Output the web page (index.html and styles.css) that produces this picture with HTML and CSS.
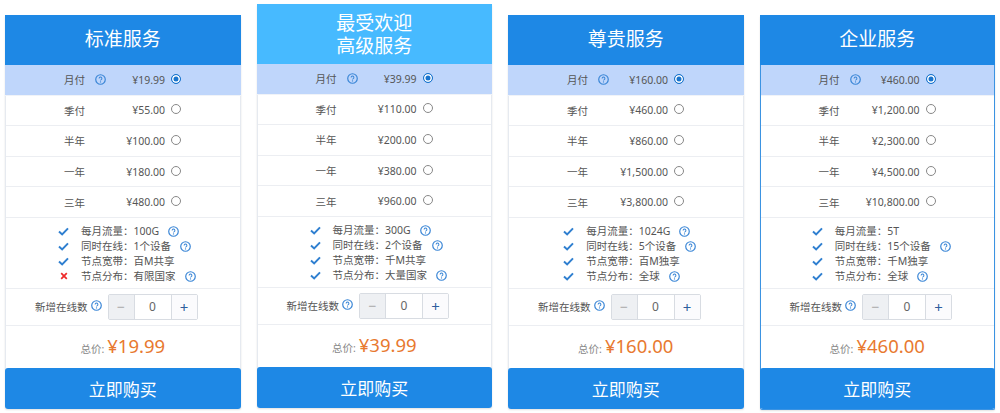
FILE: index.html
```html
<!DOCTYPE html>
<html lang="zh">
<head>
<meta charset="utf-8">
<title>服务套餐</title>
<link rel="stylesheet" href="styles.css">
</head>
<body>
<svg class="defs" width="0" height="0" aria-hidden="true">
  <defs>
    <symbol id="help" viewBox="0 0 12 12"><circle cx="6" cy="6" r="5.2" fill="none" stroke="currentColor" stroke-width="1.3"/><path d="M4.5 4.8a1.5 1.5 0 1 1 2.3 1.3c-.5.3-.8.5-.8 1" fill="none" stroke="currentColor" stroke-width="1.1"/><circle cx="6" cy="8.7" r=".7" fill="currentColor"/></symbol>
    <symbol id="check" viewBox="0 0 12 10"><path d="M1 5l3.5 3.3L11 1.5" fill="none" stroke="currentColor" stroke-width="2.2"/></symbol>
    <symbol id="cross" viewBox="0 0 10 10"><path d="M1.5 1.5l7 7M8.5 1.5l-7 7" fill="none" stroke="currentColor" stroke-width="2.2"/></symbol>
  </defs>
</svg>
<main class="plans">

<section class="card">
  <h2 class="head">标准服务</h2>
  <ul class="terms">
    <li class="term on"><span class="t-name">月付</span><svg class="help t-help"><use href="#help"/></svg><span class="t-price">¥19.99</span><i class="radio"></i></li>
    <li class="term"><span class="t-name">季付</span><span class="t-gap"></span><span class="t-price">¥55.00</span><i class="radio"></i></li>
    <li class="term"><span class="t-name">半年</span><span class="t-gap"></span><span class="t-price">¥100.00</span><i class="radio"></i></li>
    <li class="term"><span class="t-name">一年</span><span class="t-gap"></span><span class="t-price">¥180.00</span><i class="radio"></i></li>
    <li class="term"><span class="t-name">三年</span><span class="t-gap"></span><span class="t-price">¥480.00</span><i class="radio"></i></li>
  </ul>
  <ul class="feats">
    <li><svg class="ico yes"><use href="#check"/></svg>每月流量：100G<svg class="help"><use href="#help"/></svg></li>
    <li><svg class="ico yes"><use href="#check"/></svg>同时在线：1个设备<svg class="help"><use href="#help"/></svg></li>
    <li><svg class="ico yes"><use href="#check"/></svg>节点宽带：百M共享</li>
    <li><svg class="ico no"><use href="#cross"/></svg>节点分布：有限国家<svg class="help"><use href="#help"/></svg></li>
  </ul>
  <div class="qty"><span>新增在线数</span><svg class="help q-help"><use href="#help"/></svg><div class="stepper"><span class="st minus">−</span><span class="st val">0</span><span class="st plus">+</span></div></div>
  <div class="total"><span class="t-label">总价:</span><strong>¥19.99</strong></div>
  <button class="buy">立即购买</button>
</section>

<section class="card hot">
  <h2 class="head">最受欢迎<br>高级服务</h2>
  <ul class="terms">
    <li class="term on"><span class="t-name">月付</span><svg class="help t-help"><use href="#help"/></svg><span class="t-price">¥39.99</span><i class="radio"></i></li>
    <li class="term"><span class="t-name">季付</span><span class="t-gap"></span><span class="t-price">¥110.00</span><i class="radio"></i></li>
    <li class="term"><span class="t-name">半年</span><span class="t-gap"></span><span class="t-price">¥200.00</span><i class="radio"></i></li>
    <li class="term"><span class="t-name">一年</span><span class="t-gap"></span><span class="t-price">¥380.00</span><i class="radio"></i></li>
    <li class="term"><span class="t-name">三年</span><span class="t-gap"></span><span class="t-price">¥960.00</span><i class="radio"></i></li>
  </ul>
  <ul class="feats">
    <li><svg class="ico yes"><use href="#check"/></svg>每月流量：300G<svg class="help"><use href="#help"/></svg></li>
    <li><svg class="ico yes"><use href="#check"/></svg>同时在线：2个设备<svg class="help"><use href="#help"/></svg></li>
    <li><svg class="ico yes"><use href="#check"/></svg>节点宽带：千M共享</li>
    <li><svg class="ico yes"><use href="#check"/></svg>节点分布：大量国家<svg class="help"><use href="#help"/></svg></li>
  </ul>
  <div class="qty"><span>新增在线数</span><svg class="help q-help"><use href="#help"/></svg><div class="stepper"><span class="st minus">−</span><span class="st val">0</span><span class="st plus">+</span></div></div>
  <div class="total"><span class="t-label">总价:</span><strong>¥39.99</strong></div>
  <button class="buy">立即购买</button>
</section>

<section class="card">
  <h2 class="head">尊贵服务</h2>
  <ul class="terms">
    <li class="term on"><span class="t-name">月付</span><svg class="help t-help"><use href="#help"/></svg><span class="t-price">¥160.00</span><i class="radio"></i></li>
    <li class="term"><span class="t-name">季付</span><span class="t-gap"></span><span class="t-price">¥460.00</span><i class="radio"></i></li>
    <li class="term"><span class="t-name">半年</span><span class="t-gap"></span><span class="t-price">¥860.00</span><i class="radio"></i></li>
    <li class="term"><span class="t-name">一年</span><span class="t-gap"></span><span class="t-price">¥1,500.00</span><i class="radio"></i></li>
    <li class="term"><span class="t-name">三年</span><span class="t-gap"></span><span class="t-price">¥3,800.00</span><i class="radio"></i></li>
  </ul>
  <ul class="feats">
    <li><svg class="ico yes"><use href="#check"/></svg>每月流量：1024G<svg class="help"><use href="#help"/></svg></li>
    <li><svg class="ico yes"><use href="#check"/></svg>同时在线：5个设备<svg class="help"><use href="#help"/></svg></li>
    <li><svg class="ico yes"><use href="#check"/></svg>节点宽带：百M独享</li>
    <li><svg class="ico yes"><use href="#check"/></svg>节点分布：全球<svg class="help"><use href="#help"/></svg></li>
  </ul>
  <div class="qty"><span>新增在线数</span><svg class="help q-help"><use href="#help"/></svg><div class="stepper"><span class="st minus">−</span><span class="st val">0</span><span class="st plus">+</span></div></div>
  <div class="total"><span class="t-label">总价:</span><strong>¥160.00</strong></div>
  <button class="buy">立即购买</button>
</section>

<section class="card active">
  <h2 class="head">企业服务</h2>
  <ul class="terms">
    <li class="term on"><span class="t-name">月付</span><svg class="help t-help"><use href="#help"/></svg><span class="t-price">¥460.00</span><i class="radio"></i></li>
    <li class="term"><span class="t-name">季付</span><span class="t-gap"></span><span class="t-price">¥1,200.00</span><i class="radio"></i></li>
    <li class="term"><span class="t-name">半年</span><span class="t-gap"></span><span class="t-price">¥2,300.00</span><i class="radio"></i></li>
    <li class="term"><span class="t-name">一年</span><span class="t-gap"></span><span class="t-price">¥4,500.00</span><i class="radio"></i></li>
    <li class="term"><span class="t-name">三年</span><span class="t-gap"></span><span class="t-price">¥10,800.00</span><i class="radio"></i></li>
  </ul>
  <ul class="feats">
    <li><svg class="ico yes"><use href="#check"/></svg>每月流量：5T</li>
    <li><svg class="ico yes"><use href="#check"/></svg>同时在线：15个设备<svg class="help"><use href="#help"/></svg></li>
    <li><svg class="ico yes"><use href="#check"/></svg>节点宽带：千M独享</li>
    <li><svg class="ico yes"><use href="#check"/></svg>节点分布：全球<svg class="help"><use href="#help"/></svg></li>
  </ul>
  <div class="qty"><span>新增在线数</span><svg class="help q-help"><use href="#help"/></svg><div class="stepper"><span class="st minus">−</span><span class="st val">0</span><span class="st plus">+</span></div></div>
  <div class="total"><span class="t-label">总价:</span><strong>¥460.00</strong></div>
  <button class="buy">立即购买</button>
</section>

</main>
</body>
</html>
```
FILE: styles.css
```css
* { box-sizing: border-box; }
html, body { margin: 0; height: 100%; background: #fff; overflow: hidden; }
body { font-family: "Noto Sans", "Noto Sans CJK SC", sans-serif; color: #555; font-size: 10.5px; }
.defs { position: absolute; }
ul { list-style: none; margin: 0; padding: 0; }
.plans { display: flex; gap: 16px; padding: 4px 0 0 5px; align-items: flex-start; }
.card { width: 235.5px; margin-top: 11px; background: #fff; border: 1px solid #e6eaf0; border-top: 0; border-bottom: 0; border-radius: 2px; box-shadow: 0 1px 2px rgba(0,0,0,.12); display: flex; flex-direction: column; }
.card.hot { margin-top: 0; }
.card.active { border: 1px solid #3b93e2; border-top: 0; }
.head { margin: 0 -1px; height: 50px; background: #1e88e5; color: #fff; font-size: 19px; font-weight: 400; line-height: 49px; text-align: center; }
.hot .head { height: 60px; background: #47baff; line-height: 23px; padding-top: 8px; }
.term { height: 30.6px; display: flex; align-items: center; padding-left: 58px; border-bottom: 1px solid #eceef2; }
.term.on { background: #bfd6fb; margin-inline: -1px; padding-left: 59px; border-bottom-color: #f0f3f8; }
.active .term.on { margin-inline: 0; padding-left: 58px; }
.t-name { width: 21px; }
.help { width: 11px; height: 11px; color: #3a86d6; flex: none; }
.t-help { margin-left: 10px; }
.t-gap { width: 11px; margin-left: 10px; flex: none; }
.t-price { width: 59px; text-align: right; white-space: nowrap; }
.radio { width: 10px; height: 10px; border: 1px solid #888; border-radius: 50%; margin: -2px 0 0 6px; background: #fff; flex: none; }
.on .radio { background: #1874cd; border: 1px solid #1874cd; box-shadow: inset 0 0 0 1.5px #fff; }
.feats { height: 71px; padding: 6px 0 0 8px; display: grid; grid-auto-rows: 15px; justify-content: center; border-bottom: 1px solid #eceef2; }
.feats li { line-height: 15px; display: flex; align-items: center; white-space: nowrap; }
.feats .help { margin-left: 9px; }
.ico { width: 11px; height: 9px; margin-right: 12px; flex: none; }
.yes { color: #2f7fd0; }
.no { color: #ee2a2a; width: 8px; height: 8px; margin-left: 2px; margin-right: 13px; }
.qty { height: 37px; display: flex; align-items: center; padding-left: 29px; border-bottom: 1px solid #eceef2; }
.q-help { margin: -3px 0 0 3px; }
.stepper { display: flex; margin-left: 6px; height: 26px; border: 1px solid #d8dce2; border-radius: 2px; width: 90px; font-size: 12px; }
.st { display: flex; align-items: center; justify-content: center; }
.minus { width: 26px; background: #eef0f3; color: #aaa; border-right: 1px solid #d8dce2; font-size: 14px; }
.val { flex: 1; color: #666; }
.plus { width: 26px; background: #fbfbfd; color: #2e5f9e; border-left: 1px solid #d8dce2; font-size: 15px; }
.total { height: 42px; display: flex; align-items: center; justify-content: center; gap: 3px; padding-bottom: 2px; }
.t-label { font-size: 10.5px; color: #888; padding-top: 6px; }
.total strong { font-size: 18.5px; font-weight: 400; color: #e8792f; }
.buy { display: block; margin-inline: -1px; height: 41px; border: 0; border-radius: 3px; background: #1e88e5; color: #fff; font: 400 17px "Noto Sans", "Noto Sans CJK SC", sans-serif; padding: 0; }
```
